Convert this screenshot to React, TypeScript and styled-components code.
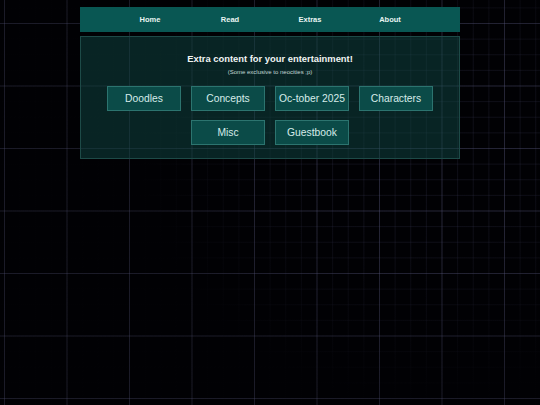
import React from 'react';
import styled, { createGlobalStyle } from 'styled-components';

const GlobalStyle = createGlobalStyle`
  html, body {
    margin: 0;
    padding: 0;
  }
  body {
    min-height: 100vh;
    font-family: "Liberation Sans", Arial, sans-serif;
    background-color: #010104;
    background-image:
      linear-gradient(90deg, rgba(100, 100, 140, 0.26) 1px, transparent 1px),
      linear-gradient(180deg, rgba(100, 100, 140, 0.26) 1px, transparent 1px),
      radial-gradient(ellipse 65% 80% at 78% 35%, transparent 30%, rgba(1, 1, 4, 0.97) 80%),
      linear-gradient(90deg, rgba(80, 80, 120, 0.17) 1px, transparent 1px),
      linear-gradient(180deg, rgba(80, 80, 120, 0.17) 1px, transparent 1px);
    background-size:
      62.5px 62.5px,
      62.5px 62.5px,
      100% 100%,
      15.625px 15.625px,
      15.625px 15.625px;
    background-position:
      4px 23px,
      4px 23px,
      0 0,
      4px 23px,
      4px 23px;
  }
`;

const Wrapper = styled.div`
  width: 380px;
  margin: 0 auto;
  padding-top: 7px;
  display: flex;
  flex-direction: column;
  gap: 4px;
`;

const NavBar = styled.nav`
  height: 25px;
  background: #095753;
  display: flex;
  justify-content: center;
  align-items: center;
`;

const NavLink = styled.a`
  width: 80px;
  text-align: center;
  color: #e8f4f2;
  font-size: 7.5px;
  font-weight: bold;
  text-decoration: none;
  cursor: pointer;
`;

const Panel = styled.section`
  box-sizing: border-box;
  border: 1px solid #1d4a47;
  background: rgba(16, 72, 68, 0.5);
  padding: 16px 0 13px;
  display: flex;
  flex-direction: column;
  align-items: center;
`;

const Heading = styled.h2`
  margin: 0;
  color: #f1f4f3;
  font-size: 9.4px;
  font-weight: bold;
`;

const Subtitle = styled.p`
  margin: 5px 0 11px;
  color: #c2d8d5;
  font-size: 6px;
`;

const ButtonGrid = styled.div`
  width: 340px;
  display: flex;
  flex-wrap: wrap;
  justify-content: center;
  gap: 9px 10px;
`;

const LinkButton = styled.button`
  box-sizing: border-box;
  width: 74px;
  height: 25px;
  padding: 0;
  background: #0b4b48;
  border: 1px solid #2c746f;
  color: #d6ecea;
  font-family: "Liberation Sans", Arial, sans-serif;
  font-size: 10.3px;
  cursor: pointer;
`;

const navItems = ['Home', 'Read', 'Extras', 'About'];
const extras = ['Doodles', 'Concepts', 'Oc-tober 2025', 'Characters', 'Misc', 'Guestbook'];

export default function App() {
  return (
    <>
      <GlobalStyle />
      <Wrapper>
        <NavBar>
          {navItems.map((item) => (
            <NavLink key={item}>{item}</NavLink>
          ))}
        </NavBar>
        <Panel>
          <Heading>Extra content for your entertainment!</Heading>
          <Subtitle>(Some exclusive to neocities ;p)</Subtitle>
          <ButtonGrid>
            {extras.map((label) => (
              <LinkButton key={label}>{label}</LinkButton>
            ))}
          </ButtonGrid>
        </Panel>
      </Wrapper>
    </>
  );
}
